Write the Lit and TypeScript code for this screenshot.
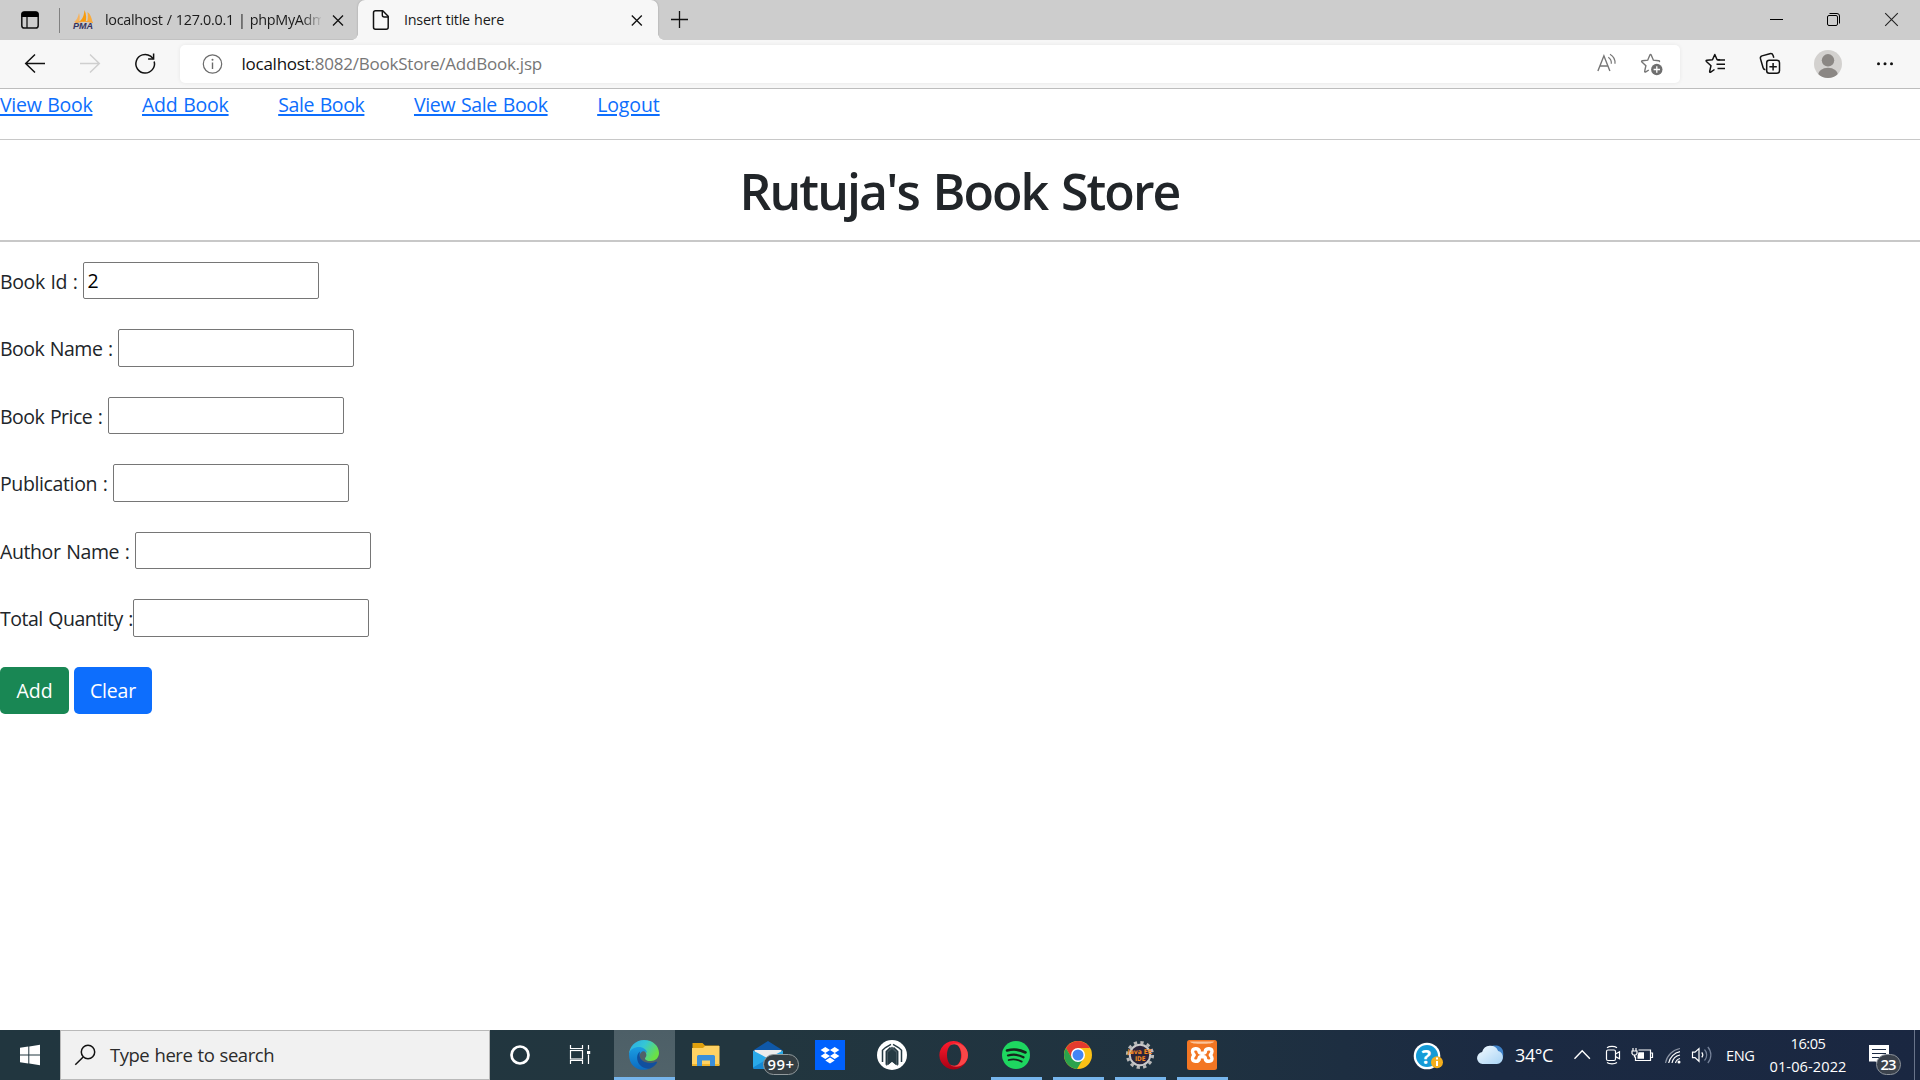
import { LitElement, html, svg, css, TemplateResult, SVGTemplateResult } from "lit";
import { customElement, property } from "lit/decorators.js";

/** A single run of text tracked so that it fills exactly `width` pixels. */
@customElement("fit-text")
class FitText extends LitElement {
  @property() text = "";
  @property({ type: Number }) width = 0;

  static styles = css`
    :host { display: inline-block; white-space: pre; word-spacing: .05em; }
  `;

  render() {
    return html`<span>${this.text}</span>`;
  }

  updated() {
    const span = this.renderRoot.querySelector("span") as HTMLElement;
    span.style.letterSpacing = "0px";
    const natural = span.getBoundingClientRect().width;
    span.style.letterSpacing = (this.width - natural) / this.text.length + "px";
  }
}

const fit = (text: string, width: number) =>
  html`<fit-text .text=${text} .width=${width}></fit-text>`;

/** Icon cell; its drawing uses window coordinates through the viewBox. */
const icon = (x: number, y: number, w: number, h: number, body: SVGTemplateResult) =>
  html`<svg class="icon" width=${w} height=${h} viewBox="${x} ${y} ${w} ${h}" fill="none">${body}</svg>`;

const shared = css`
  * { box-sizing: border-box; }
  .icon { display: block; flex: none; }
`;

@customElement("tab-strip")
class TabStrip extends LitElement {
  static styles = [shared, css`
    :host { display: flex; height: 40px; background: #cdcdcd; color: #1b1b1b; font-size: 14.4px; line-height: 39px; }
    .tab { display: flex; height: 40px; position: relative; }
    .idle { width: 298px; border-bottom: 1px solid #c2c2c2; }
    .active { width: 300px; background: #f7f7f7; border-radius: 7px 7px 0 0; box-shadow: 0 0 2px #999; clip-path: inset(0 -8px 0 -8px); }
    .active::before, .active::after { content: ""; position: absolute; bottom: 0; width: 6px; height: 6px; }
    .active::before { left: -6px; background: radial-gradient(circle at 0 0, transparent 5.5px, #f7f7f7 6px); }
    .active::after { right: -6px; background: radial-gradient(circle at 100% 0, transparent 5.5px, #f7f7f7 6px); }
    .clip { width: 216px; overflow: hidden; -webkit-mask-image: linear-gradient(90deg, #000 91%, transparent 101%); mask-image: linear-gradient(90deg, #000 91%, transparent 101%); }
    .title { flex: 1; }
    .spring { flex: 1; }
  `];

  render() {
    return html`
      ${icon(0, 0, 60, 40, svg`
        <rect x="21.8" y="12" width="16.4" height="16" rx="2.6" stroke="#111" stroke-width="1.5"/>
        <path d="M21.5 17v-2.500a3 3 0 0 1 3-3h11a3 3 0 0 1 3 3V17z" fill="#000"/>
        <path d="M27 17v11" stroke="#111" stroke-width="1.3"/>
        <path d="M59.500 8v25" stroke="#818181"/>`)}
      <div class="tab idle">
        ${icon(60, 0, 45, 40, svg`
          <path d="M74 22c3-2 4-5 5-9 1 3 1 6 0 9z" fill="#f7b35c"/>
          <path d="M79 22c4-3 5-7 5.500-12 2 4 2 9 1 12z" fill="#f89c0e"/>
          <path d="M87 22c1-3 1-6 .500-10 3 2 4 6 5 10z" fill="#f9ab3c"/>
          <path d="M75 23c6-2 11-2 18-.500" stroke="#f4a33a" stroke-width="1"/>
          <text x="73" y="29.200" font-family="Liberation Sans" font-weight="700" font-style="italic" font-size="8.500" textLength="20" lengthAdjust="spacingAndGlyphs" fill="#35335f">PMA</text>`)}
        <div class="clip">${fit("localhost / 127.0.0.1 | phpMyAdmin", 232)}</div>
        ${icon(321, 0, 37, 40, svg`<path d="M333 15.500l10 10m0-10l-10 10" stroke="#111" stroke-width="1.300"/>`)}
      </div>
      <div class="tab active">
        ${icon(358, 0, 46, 40, svg`
          <path d="M375.500 10.800h7.200l5.500 5.500v11a2 2 0 0 1-2 2h-10.700a2 2 0 0 1-2-2v-14.500a2 2 0 0 1 2-2z" stroke="#111" stroke-width="1.500"/>
          <path d="M382.300 11v4a2 2 0 0 0 2 2h4" stroke="#111" stroke-width="1.400"/>`)}
        <div class="title">${fit("Insert title here", 100)}</div>
        ${icon(620, 0, 38, 40, svg`<path d="M631.800 15.500l10 10m0-10l-10 10" stroke="#111" stroke-width="1.300"/>`)}
      </div>
      ${icon(658, 0, 60, 40, svg`<path d="M671 19.500h17M679.500 11v17" stroke="#111" stroke-width="1.300"/>`)}
      <div class="spring"></div>
      ${icon(1750, 0, 170, 40, svg`
        <path d="M1770 19.500h13" stroke="#000"/>
        <rect x="1827.500" y="15.500" width="10" height="10" rx="1.500" stroke="#000"/>
        <path d="M1829.500 13.500h7.500a2.500 2.500 0 0 1 2.500 2.500v7.500" stroke="#000"/>
        <path d="M1885.200 13.200l12.600 12.600m0-12.600l-12.600 12.600" stroke="#222" stroke-width="1.100"/>`)}
    `;
  }
}

@customElement("tool-bar")
class ToolBar extends LitElement {
  static styles = [shared, css`
    :host { display: flex; height: 49px; background: #f7f7f7; border-bottom: 1px solid #bdbdbd; font-size: 17px; }
    .address { display: flex; flex: 1; height: 38px; margin-top: 5px; background: #fff; border-radius: 5px; box-shadow: 0 0 4px rgba(0, 0, 0, .07); line-height: 37px; color: #767676; }
    .host { color: #111; }
    .url { flex: 1; display: flex; }
  `];

  render() {
    return html`
      ${icon(0, 40, 180, 48, svg`
        <path d="M45 63.500H26m9-9l-9.300 9 9.300 9" stroke="#111" stroke-width="1.500"/>
        <path d="M80 63.500h19m-9-9l9.300 9-9.300 9" stroke="#cfcfcf" stroke-width="1.500"/>
        <path d="M154.200 61.500a9.300 9.300 0 1 1-3.600-5.300l2.800 2.600" stroke="#111" stroke-width="1.500"/>
        <path d="M153.600 53.500v5.500h-5.500" stroke="#111" stroke-width="1.500"/>`)}
      <div class="address">
        ${icon(180, 45, 61.5, 38, svg`
          <circle cx="212.500" cy="64" r="9.200" stroke="#6b6b6b" stroke-width="1.200"/>
          <path d="M212.500 62.500v6.500" stroke="#6b6b6b" stroke-width="1.400"/><circle cx="212.500" cy="59.800" r="1" fill="#6b6b6b"/>`)}
        <div class="url"><span class="host">${fit("localhost", 69)}</span>${fit(":8082/BookStore/AddBook.jsp", 231.5)}</div>
        ${icon(1590, 45, 90, 38, svg`
          <g stroke="#767676" stroke-width="1.400">
            <path d="M1597.900 71l6-15.200 6 15.200M1600 66h7.800"/>
            <path d="M1608.300 57.300a7 7 0 0 1 3 6.500M1610 54.300a10 10 0 0 1 5 9.500" stroke-width="1.200"/>
            <path d="M1647.500 69.500l-3 1.800c-.800.500-1.300 0-1.100-.800l1.200-5.300-4-3.700c-.600-.600-.300-1.200.500-1.300l5.300-.500 2.200-5.200c.3-.700 1-.7 1.300 0l2.200 5.200 5.300.500c.800.100 1.200.700.5 1.300" transform="translate(1.300 0.500)"/>
          </g>
          <circle cx="1656.800" cy="69.500" r="5.700" fill="#6f6f6f"/>
          <path d="M1656.800 66.300v6.400m-3.200-3.200h6.400" stroke="#fff" stroke-width="1.300"/>`)}
      </div>
      ${icon(1680, 40, 240, 48, svg`
        <g stroke="#111" stroke-width="1.500" stroke-linejoin="round">
          <path d="M1714.500 69.500l-3.800 2.600c-.800.500-1.200 0-1-.800l1.300-5.600-4.600-4.200c-.600-.600-.3-1.200.5-1.300l5.600-.5 2.300-5.200 2.300 5.200h3"/>
          <path d="M1717.500 60h7.500M1716.500 64.300h8.500M1717.500 68.600h7.500"/>
          <path d="M1765.400 69.700c-1.200-.2-2-.8-2.300-2l-2.600-8.800c-.400-1.500.3-2.600 1.500-3l7.800-2.200c1.500-.4 2.800.3 3.300 1.700l.7 2.400"/>
          <rect x="1766.700" y="60.200" width="12.800" height="13" rx="2.500"/>
          <path d="M1773.100 63v7.400m-3.700-3.700h7.400"/>
        </g>
        <clipPath id="face"><circle cx="1828" cy="64" r="14"/></clipPath>
        <circle cx="1828" cy="64" r="14" fill="#d3d1cf"/>
        <g clip-path="url(#face)" fill="#8b8784"><circle cx="1828" cy="60.300" r="6.200"/><ellipse cx="1828" cy="75.500" rx="10.200" ry="7.700"/></g>
        <g fill="#111"><circle cx="1878.500" cy="63.700" r="1.500"/><circle cx="1885" cy="63.700" r="1.500"/><circle cx="1891.500" cy="63.700" r="1.500"/></g>`)}
    `;
  }
}

interface Link { text: string; width: number; }
interface Field { label: string; width: number; gap: boolean; value: string; }

@customElement("book-page")
class BookPage extends LitElement {
  static styles = [shared, css`
    :host { display: block; flex: 1; background: #fff; color: #212529; font-size: 19.5px; }
    nav { display: flex; gap: 49.6px; height: 50px; line-height: 32px; }
    nav a { color: #0d6efd; }
    nav fit-text { text-decoration: underline; text-decoration-thickness: 2px; text-underline-offset: 1.5px; }
    .title { height: 102px; border-top: 1px solid #c8c8c8; padding: 20px 1px 0 0; text-align: center; font-size: 50px; font-weight: 600; line-height: 62px; margin: 0; }
    .rule { height: 2px; margin-top: -1px; background: #c8c8c8; }
    form { display: flex; flex-direction: column; gap: 30px; padding-top: 19.75px; }
    .row { display: flex; height: 37.5px; line-height: 39.5px; }
    .gap { margin-right: 5.5px; }
    input { width: 236px; height: 37.5px; margin: 0; border: 1px solid #767676; border-radius: 2px; padding: 0 3.5px; font: inherit; line-height: normal; color: #000; background: #fff; outline: none; }
    .buttons { display: flex; gap: 5px; }
    button { height: 47.5px; border: 0; border-radius: 5px; padding: 0; color: #fff; font: inherit; line-height: 47px; }
    .add { width: 69px; background: #198754; }
    .clear { width: 78px; background: #0d6efd; }
  `];

  links: Link[] = [
    { text: "View Book", width: 92.4 },
    { text: "Add Book", width: 86.6 },
    { text: "Sale Book", width: 86.2 },
    { text: "View Sale Book", width: 133.6 },
    { text: "Logout", width: 62.5 },
  ];

  fields: Field[] = [
    { label: "Book Id :", width: 77.5, gap: true, value: "2" },
    { label: "Book Name :", width: 112.5, gap: true, value: "" },
    { label: "Book Price :", width: 102.5, gap: true, value: "" },
    { label: "Publication :", width: 107.5, gap: true, value: "" },
    { label: "Author Name :", width: 129.5, gap: true, value: "" },
    { label: "Total Quantity :", width: 133, gap: false, value: "" },
  ];

  render() {
    return html`
      <nav>${this.links.map((l) => html`<a>${fit(l.text, l.width)}</a>`)}</nav>
      <h1 class="title">${fit("Rutuja's Book Store", 440)}</h1>
      <div class="rule"></div>
      <form>
        ${this.fields.map((f) => html`
          <div class="row">
            <label class=${f.gap ? "gap" : ""}>${fit(f.label, f.width)}</label>
            <input .value=${f.value} />
          </div>`)}
        <div class="buttons">
          <button class="add" type="button">${fit("Add", 36)}</button>
          <button class="clear" type="button">${fit("Clear", 46)}</button>
        </div>
      </form>
    `;
  }
}

@customElement("task-bar")
class TaskBar extends LitElement {
  static styles = [shared, css`
    :host { display: flex; height: 50px; background: linear-gradient(90deg, #21363f 0, #22363f 40%, #1f3240 62%, #1b2a42 78%, #1a2741 100%); color: #fff; }
    .search { display: flex; width: 430px; background: #f1f1f1; border: 1px solid #b9b9b9; color: #2b2b2b; font-size: 18.5px; line-height: 47px; }
    .apps { display: flex; width: 910px; }
    .app { width: 62px; height: 50px; display: flex; flex-direction: column; justify-content: flex-end; }
    .app .icon { margin-bottom: -3px; }
    .bar { width: 51px; height: 3px; margin-left: 5px; background: #76b5ec; z-index: 1; }
    .idle { background: none; }
    .on { background: linear-gradient(#4d5f67, #51636a); width: 61px; margin-right: 1px; }
    .on .bar { width: 61px; margin-left: 0; }
    .degrees { width: 39px; font-size: 18px; line-height: 51px; }
    .lang { width: 37px; font-size: 14.6px; line-height: 50px; }
    .clock { width: 90px; font-size: 14.6px; line-height: 23px; padding-top: 2px; display: flex; flex-direction: column; align-items: center; margin-right: 10px; }
  `];

  private app(cx: number, state: string, body: SVGTemplateResult): TemplateResult {
    return html`<div class="app ${state === "focus" ? "on" : ""}">
      ${icon(cx - 30, 1030, state === "focus" ? 61 : 62, 50, body)}
      <div class="bar ${state ? "" : "idle"}"></div>
    </div>`;
  }

  render() {
    return html`
      ${icon(0, 1030, 60, 50, svg`<path d="M20 1047.800l8.300-1.200v7.900H20zM29.300 1046.400l10.700-1.600v9.700h-10.700zM20 1055.500h8.300v7.900l-8.300-1.200zM29.300 1055.500H40v9.700l-10.700-1.600z" fill="#fff"/>`)}
      <div class="search">
        ${icon(61, 1031, 49, 48, svg`<circle cx="88" cy="1052" r="6.700" stroke="#111" stroke-width="1.500"/><path d="M83.200 1057l-7.900 7.700" stroke="#111" stroke-width="1.500"/>`)}
        ${fit("Type here to search", 164)}
      </div>
      <div class="apps">
        ${this.app(520, "", svg`<circle cx="520" cy="1055" r="8.500" stroke="#fff" stroke-width="2.700"/>`)}
        ${this.app(582, "", svg`
          <path d="M570.500 1045v3.500h12V1045M570.500 1064v-3.500h12v3.500" stroke="#fff" stroke-width="1.200"/>
          <rect x="570.500" y="1050.500" width="12" height="8.500" stroke="#fff" stroke-width="1.200"/>
          <path d="M588.500 1045v4.500m0 5v9.500" stroke="#fff" stroke-width="1.200"/><rect x="587" y="1051" width="3.200" height="3" fill="#fff"/>`)}
        ${this.app(644, "focus", svg`
          <defs>
            <linearGradient id="eg" x1="0" y1="0" x2="1" y2=".5"><stop offset="0" stop-color="#2aa9e8"/><stop offset=".5" stop-color="#35c6d5"/><stop offset="1" stop-color="#6be144"/></linearGradient>
            <linearGradient id="eb" x1="0" y1="0" x2="0" y2="1"><stop offset="0" stop-color="#1b9de2"/><stop offset="1" stop-color="#0b6bc2"/></linearGradient>
          </defs>
          <path d="M629 1055c0-8 6-15 15-15 9 0 15 6 15 13 0 5-4 8-8 8-3.500 0-6-1.200-6-2.600 0-.8 1.400-1.300 1.400-3.400 0-3-3-6-7.400-6-5 0-10 2.500-10 6z" fill="url(#eg)"/>
          <path d="M629 1054c1-5 5.500-7 10-7 4 0 7.500 2.500 8.200 6-1.200-1.200-2.200-1.700-3.700-1.700-2 0-4 2.500-4 6 0 6 4.500 11.700 10.500 11-8 4-21 .7-21-14.300z" fill="url(#eb)"/>
          <path d="M640 1051.500c-4 3-3.500 9-.5 13 3 3.700 9 5.500 12.500 3 2-1.200 4-3 5-5 .3-.8-.3-1-1-.7-8 3.500-16.500-1-16.500-6.500 0-1.500.3-3 .5-3.800z" fill="#114f9e"/>`)}
        ${this.app(706, "", svg`
          <path d="M692.500 1043h10l2.500 2.500h14v4h-26.500z" fill="#e0a00c"/>
          <path d="M692 1048h11l2-2h14.500v19a1 1 0 0 1-1 1h-25.500a1 1 0 0 1-1-1z" fill="#ffd263"/>
          <path d="M692 1064h27.500v1a1 1 0 0 1-1 1h-25.500a1 1 0 0 1-1-1z" fill="#f0b52b"/>
          <path d="M697 1066v-9.500a1.500 1.500 0 0 1 1.500-1.500h15a1.500 1.500 0 0 1 1.500 1.500v9.500h-5v-5.500h-8v5.500z" fill="#3b8fd9"/>`)}
        ${this.app(768, "", svg`
          <path d="M753 1050.500l15-9.500 15 9.500z" fill="#0f58a8"/>
          <path d="M754.500 1050h27v9h-27z" fill="#ececec"/>
          <path d="M753 1050.500l15 8 15-8V1067a2 2 0 0 1-2 2h-26a2 2 0 0 1-2-2z" fill="#29a9e8"/>
          <path d="M753 1067.500l15-9 5 2.500-10 8h-8a2 2 0 0 1-2-1.500z" fill="#1688d2"/>
          <rect x="763.500" y="1054.500" width="35" height="20" rx="10" fill="#343e43" stroke="#929a9d"/>
          <text x="767.500" y="1070" font-size="14.800" font-weight="600" font-family="Open Sans" textLength="26.500" fill="#fff">99+</text>`)}
        ${this.app(830, "", svg`
          <rect x="815" y="1040" width="30" height="30" fill="#0061fe"/>
          <path d="M825.300 1047l4.700 3-4.700 3-4.700-3zM834.700 1047l4.700 3-4.700 3-4.700-3zM825.300 1053l4.700 3-4.700 3-4.700-3zM834.700 1053l4.700 3-4.700 3-4.700-3zM830 1057.500l4.700 3-4.700 3-4.700-3z" fill="#fff"/>`)}
        ${this.app(892, "", svg`
          <circle cx="892" cy="1055" r="15" fill="#fff"/>
          <path d="M891 1044.300l-5.500 3.200-3 2.800v11.700M893 1044.300l5.500 3.200 3 2.800v11.700" stroke="#263a43" stroke-width="1.500"/>
          <path d="M890.500 1047.500l-4.200 4V1064.800M893.500 1047.500l4.200 4V1064.800" stroke="#263a43" stroke-width="1.500"/>
          <path d="M886.300 1052l5.700-5.500 5.700 5.500v14l-5.700-4.500-5.700 4.500z" fill="#263a43" fill-opacity=".85"/>
          <path d="M888 1065v-12.500l4-3.500 4 3.500V1065l-4-3.200z" fill="#263a43"/>`)}
        ${this.app(954, "", svg`
          <defs><linearGradient id="op" x1="0" y1="0" x2="0" y2="1"><stop offset="0" stop-color="#ff1b2d"/><stop offset="1" stop-color="#a70014"/></linearGradient></defs>
          <path fill-rule="evenodd" d="M953.500 1041a14.200 14.200 0 1 0 .1 0zM954 1044c4.200 0 7 4.800 7 11s-2.800 11-7 11-7-4.800-7-11 2.800-11 7-11z" fill="url(#op)"/>
          <path d="M950 1045.500c5-5 18-1.500 18 9.500s-13 14.500-18 9.500c7 4 11.500-2 11.500-9.500s-4.500-13.500-11.500-9.500z" fill="#fb4648"/>`)}
        ${this.app(1016, "run", svg`
          <circle cx="1016" cy="1055" r="14" fill="#1ed760"/>
          <path d="M1007 1050.500c6.500-1.800 13-1 18.500 2" stroke="#17241c" stroke-width="2.600" stroke-linecap="round"/>
          <path d="M1008 1055.500c5.500-1.500 11-.8 15.500 1.800" stroke="#17241c" stroke-width="2.200" stroke-linecap="round"/>
          <path d="M1008.700 1060c4.600-1.200 9-.6 13 1.600" stroke="#17241c" stroke-width="1.800" stroke-linecap="round"/>`)}
        ${this.app(1078, "run", svg`
          <circle cx="1078" cy="1055" r="14" fill="#fbc116"/>
          <path d="M1078 1048h12.100A14 14 0 0 0 1065.900 1048l6 10.500z" fill="#e33b2e"/>
          <path d="M1065.900 1048a14 14 0 0 0 11.100 21l6.300-10.500h-11.300z" fill="#2ba24c"/>
          <circle cx="1078" cy="1055" r="7" fill="#fff"/><circle cx="1078" cy="1055" r="5.500" fill="#4285f4"/>`)}
        ${this.app(1140, "run", svg`
          <circle cx="1140" cy="1055" r="12.600" stroke="#b8b8b8" stroke-width="3" stroke-dasharray="3.300 3.297"/>
          <circle cx="1140" cy="1055" r="10.200" fill="#29243a" stroke="#c9c9c9" stroke-width="2"/>
          <text x="1127.500" y="1054" font-size="6.500" font-weight="700" font-family="DejaVu Sans" textLength="24.500" lengthAdjust="spacingAndGlyphs" fill="#f58a1f">Java EE</text>
          <text x="1135" y="1061" font-size="6.500" font-weight="700" font-family="DejaVu Sans" textLength="10.500" lengthAdjust="spacingAndGlyphs" fill="#f58a1f">IDE</text>`)}
        ${this.app(1202, "run", svg`
          <rect x="1187" y="1040" width="30" height="30" rx="2.500" fill="#f37623"/>
          <path d="M1190 1041.500h24c-1 2-5 2.300-12 2.300s-11-.3-12-2.300z" fill="#fbc49b"/>
          <g stroke="#fff" stroke-width="3.400" stroke-linejoin="round" stroke-linecap="round">
            <path d="M1199 1050.500c-1-2.500-6.500-2.500-6.500 1 0 1.500.7 2.500 1.700 3.500-1 1-1.700 2-1.700 3.500 0 3.500 5.500 3.500 6.500 1"/>
            <path d="M1205.500 1050.500c1-2.500 6.500-2.500 6.500 1 0 1.500-.7 2.500-1.700 3.500 1 1 1.700 2 1.700 3.500 0 3.500-5.500 3.500-6.500 1"/>
            <path d="M1199 1050.500c0 2 .8 2.700 2 2.700h2.500c1.200 0 2-.7 2-2.700M1199 1059.500c0-2 .8-2.700 2-2.700h2.500c1.200 0 2 .7 2 2.700"/>
          </g>`)}
      </div>
      ${icon(1400, 1030, 115, 50, svg`
        <circle cx="1427" cy="1056" r="13.300" fill="#fff"/><circle cx="1427" cy="1056" r="11" fill="#159bd7"/>
        <text x="1421.500" y="1063.500" font-size="20" font-weight="700" font-family="Open Sans" fill="#fff">?</text>
        <circle cx="1437" cy="1062.300" r="6" fill="#f3ae1c"/><path d="M1437 1061v5m0-8.500v2" stroke="#fff" stroke-width="2"/>
        <defs><linearGradient id="cl" x1="0" y1="0" x2="1" y2="1"><stop offset="0" stop-color="#f4fbff"/><stop offset="1" stop-color="#a8d3f5"/></linearGradient></defs>
        <path d="M1492 1046c5-1.500 10 .5 11 5 .8 4 0 8-2 10z" fill="#3f82c9"/>
        <path d="M1482.500 1064a6 6 0 0 1-.4-11.900 8.500 8.500 0 0 1 16-1.200c3 .7 4.800 3.200 4.800 6.400 0 3.700-2.600 6.700-6 6.700z" fill="url(#cl)"/>`)}
      <div class="degrees">${fit("34°C", 38)}</div>
      ${icon(1554, 1030, 172, 50, svg`
        <path d="M1574.500 1058.800l7.700-8 7.700 8" stroke="#fff" stroke-width="1.400"/>
        <g stroke="#fff" stroke-width="1.200">
          <rect x="1606.500" y="1050" width="9" height="10.500" rx="1.500"/><path d="M1615.500 1054l4-2.200v7l-4-2.200M1607 1047.800c2.500-1.800 7.500-1.800 10 0M1607 1062.500c2.500 1.800 7.500 1.800 10 0"/>
          <path d="M1638.500 1050h12v10.500h-15v-4M1651 1053h1.500v4.500h-1.500"/>
          <path d="M1632 1051h5v2.500l-1.200 1.500h-2.600l-1.200-1.500zM1633 1048v3m3-3v3m-1.500 4v2.500"/>
          <path d="M1665.500 1063a18 18 0 0 1 14.500-14.500" stroke="#8992a2"/>
          <path d="M1668.700 1063a14 14 0 0 1 11.300-11.300M1672 1063a10 10 0 0 1 8-8M1675.500 1063a6 6 0 0 1 4.500-4.500"/>
          <path d="M1692.500 1052.200h2.500l4-3.700v12.800l-4-3.700h-2.500z"/><path d="M1701.800 1052.300a4 4 0 0 1 0 5"/>
          <path d="M1704.500 1049.500a8 8 0 0 1 0 11M1707.800 1047a12 12 0 0 1 0 16" stroke="#76839a"/>
        </g>
        <path d="M1638.500 1052.200h5.500v6.500h-6.500v-3z" fill="#fff"/><circle cx="1679" cy="1062" r="1.500" fill="#fff"/>`)}
      <div class="lang">${fit("ENG", 28.5)}</div>
      <div class="clock">${fit("16:05", 35)}${fit("01-06-2022", 77)}</div>
      ${icon(1863, 1030, 57, 50, svg`
        <path d="M1869 1045h20v16.500h-9.500v4l-4-4h-6.500z" fill="#fff"/>
        <path d="M1872 1049.500h14M1872 1053.500h14M1872 1057.500h10" stroke="#1b2a42" stroke-width="1.200"/>
        <rect x="1876.500" y="1054.500" width="24" height="20" rx="10" fill="#3b424c" stroke="#8e949c"/>
        <text x="1880.500" y="1069.800" font-size="14.800" font-weight="600" font-family="Open Sans" textLength="16" fill="#fff">23</text>
        <path d="M1914.500 1030v50" stroke="#69748a"/>`)}
    `;
  }
}

@customElement("app-root")
class AppRoot extends LitElement {
  static styles = css`
    :host { display: flex; flex-direction: column; width: 1920px; height: 1080px; overflow: hidden; font-family: "Open Sans", "Noto Sans", sans-serif; }
    tab-strip, tool-bar, task-bar { flex: none; box-sizing: border-box; }
  `;

  render() {
    return html`
      <tab-strip></tab-strip>
      <tool-bar></tool-bar>
      <book-page></book-page>
      <task-bar></task-bar>
    `;
  }
}
